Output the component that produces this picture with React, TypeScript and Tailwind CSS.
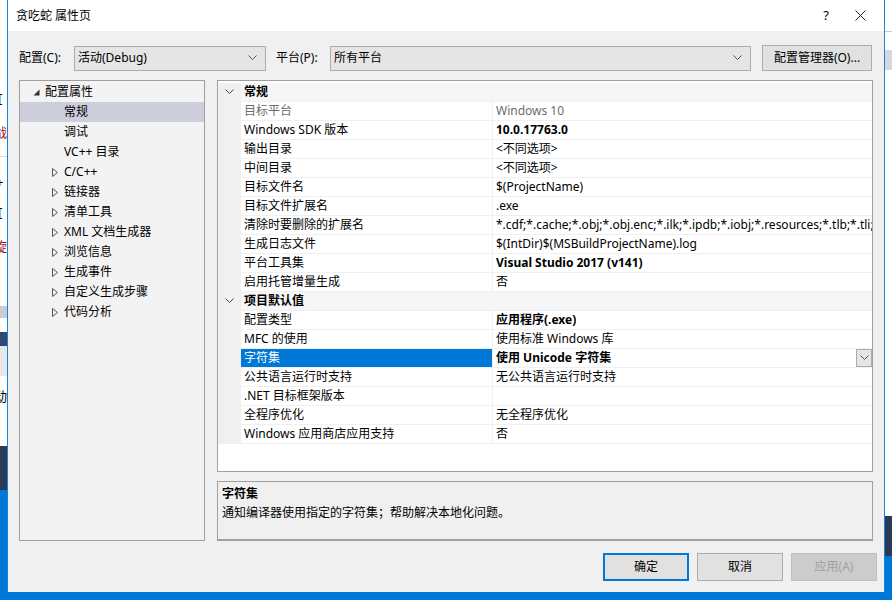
import React from 'react';

type Row = { name: string; value: string; bold?: boolean; muted?: boolean; selected?: boolean };

const general: Row[] = [
  { name: '目标平台', value: 'Windows 10', muted: true },
  { name: 'Windows SDK 版本', value: '10.0.17763.0', bold: true },
  { name: '输出目录', value: '<不同选项>' },
  { name: '中间目录', value: '<不同选项>' },
  { name: '目标文件名', value: '$(ProjectName)' },
  { name: '目标文件扩展名', value: '.exe' },
  {
    name: '清除时要删除的扩展名',
    value: '*.cdf;*.cache;*.obj;*.obj.enc;*.ilk;*.ipdb;*.iobj;*.resources;*.tlb;*.tli;*.tlh;*.tmp;*.rsp',
  },
  { name: '生成日志文件', value: '$(IntDir)$(MSBuildProjectName).log' },
  { name: '平台工具集', value: 'Visual Studio 2017 (v141)', bold: true },
  { name: '启用托管增量生成', value: '否' },
];

const defaults: Row[] = [
  { name: '配置类型', value: '应用程序(.exe)', bold: true },
  { name: 'MFC 的使用', value: '使用标准 Windows 库' },
  { name: '字符集', value: '使用 Unicode 字符集', bold: true, selected: true },
  { name: '公共语言运行时支持', value: '无公共语言运行时支持' },
  { name: '.NET 目标框架版本', value: '' },
  { name: '全程序优化', value: '无全程序优化' },
  { name: 'Windows 应用商店应用支持', value: '否' },
];

const tree = [
  { label: '常规', exp: false, selected: true },
  { label: '调试', exp: false },
  { label: 'VC++ 目录', exp: false },
  { label: 'C/C++', exp: true },
  { label: '链接器', exp: true },
  { label: '清单工具', exp: true },
  { label: 'XML 文档生成器', exp: true },
  { label: '浏览信息', exp: true },
  { label: '生成事件', exp: true },
  { label: '自定义生成步骤', exp: true },
  { label: '代码分析', exp: true },
];

function Chevron({ className = '' }: { className?: string }) {
  return (
    <svg width="9" height="6" viewBox="0 0 9 6" className={className}>
      <polyline points="0.5,0.5 4.5,4.5 8.5,0.5" fill="none" stroke="currentColor" strokeWidth="1" />
    </svg>
  );
}

function Combo({ text, width }: { text: string; width: string }) {
  return (
    <div className={`${width} h-[25px] flex items-center justify-between border border-[#acacac] bg-[#e5e5e5] pl-[3px] pr-[8px]`}>
      <span>{text}</span>
      <Chevron className="text-[#555]" />
    </div>
  );
}

function Category({ title }: { title: string }) {
  return (
    <div className="flex h-[19px] border-b border-[#f0f0f0] bg-[#f5f6f8]">
      <div className="w-[23px] flex items-center justify-center bg-[#f0f0f0]">
        <Chevron className="text-[#444]" />
      </div>
      <div className="flex items-center pl-[3px] font-bold">{title}</div>
    </div>
  );
}

function PropRow({ r }: { r: Row }) {
  return (
    <div className="flex h-[19px] border-b border-[#f0f0f0]">
      <div className="w-[23px] shrink-0 bg-[#f0f0f0]" />
      <div
        className={`w-[251px] shrink-0 flex items-center pl-[3px] whitespace-nowrap overflow-hidden ${
          r.selected ? 'bg-[#0078d7] text-white' : r.muted ? 'text-[#6d6d6d]' : ''
        }`}
      >
        {r.name}
      </div>
      <div className="w-px shrink-0 bg-[#f0f0f0]" />
      <div
        className={`flex-1 min-w-0 flex items-center justify-between pl-[3px] whitespace-nowrap overflow-hidden ${
          r.bold ? 'font-bold' : ''
        } ${r.muted ? 'text-[#6d6d6d]' : ''}`}
      >
        <span className="overflow-hidden">{r.value}</span>
        {r.selected && (
          <div className="shrink-0 w-[16px] h-[18px] border border-[#acacac] bg-[#e5e5e5] flex items-center justify-center">
            <Chevron className="text-[#555]" />
          </div>
        )}
      </div>
    </div>
  );
}

function Btn({ label, kind }: { label: string; kind?: 'default' | 'disabled' }) {
  const cls =
    kind === 'default'
      ? 'border-2 border-[#0078d7] bg-[#e1e1e1]'
      : kind === 'disabled'
        ? 'border border-[#bfbfbf] bg-[#cccccc] text-[#a0a0a0]'
        : 'border border-[#adadad] bg-[#e1e1e1]';
  return <div className={`w-[86px] h-[28px] flex items-center justify-center ${cls}`}>{label}</div>;
}

export default function App() {
  return (
    <div
      className="w-[892px] h-[600px] flex flex-col overflow-hidden bg-white text-[12px] text-black"
      style={{ fontFamily: '"Segoe UI", "Noto Sans", "Noto Sans CJK SC", sans-serif' }}
    >
      <div className="flex h-[592px]">
        {/* background window edge on the left */}
        <div className="w-[7px] shrink-0 flex flex-col overflow-hidden bg-white text-[13px] leading-none">
          <div className="h-[92px]" />
          <div className="h-[34px] -ml-[2px]">[</div>
          <div className="h-[30px] -ml-[6px] text-[#a31515]">战</div>
          <div className="h-[20px] border-t border-[#ddd]" />
          <div className="h-[30px] -ml-[4px]">+</div>
          <div className="h-[34px] -ml-[2px]">[</div>
          <div className="h-[40px] -ml-[6px] text-[#a31515]">旋</div>
          <div className="h-[26px]" />
          <div className="h-[12px] bg-[#c9ccd3]" />
          <div className="h-[14px] bg-white" />
          <div className="h-[14px] bg-[#2f4a6e]" />
          <div className="h-[30px] bg-[#e8e8ec]" />
          <div className="h-[40px] -ml-[6px] pt-[14px]">动</div>
          <div className="h-[30px]" />
          <div className="h-[44px] bg-[#2b3a55]" />
          <div className="flex-1 bg-[#0078d7]" />
        </div>

        {/* dialog */}
        <div className="w-[878px] shrink-0 flex flex-col border-x border-[#1883d7] bg-[#f0f0f0]">
          <div className="h-[31px] shrink-0 flex items-center bg-white pl-[8px]">
            <span className="flex-1 text-[12px]">贪吃蛇 属性页</span>
            <span className="w-[30px] text-center text-[13px] mr-[14px]">?</span>
            <svg width="11" height="11" viewBox="0 0 11 11" className="mr-[18px]">
              <path d="M0.5 0.5 L10.5 10.5 M10.5 0.5 L0.5 10.5" stroke="#222" strokeWidth="1" />
            </svg>
          </div>

          <div className="flex items-center mt-[14px] pl-[11px] h-[26px]">
            <span className="w-[55px]">配置(C):</span>
            <Combo text="活动(Debug)" width="w-[192px]" />
            <span className="ml-[10px] w-[54px]">平台(P):</span>
            <Combo text="所有平台" width="w-[421px]" />
            <div className="ml-[11px] w-[110px] h-[26px] border border-[#adadad] bg-[#e1e1e1] flex items-center justify-center">
              配置管理器(O)...
            </div>
          </div>

          <div className="flex mt-[9px] pl-[11px] gap-[12px]">
            <div className="w-[186px] h-[461px] border border-[#a0a0a0] bg-[#f3f3f3] pt-px">
              <div className="h-[20px] flex items-center pl-[13px]">
                <svg width="7" height="7" viewBox="0 0 7 7">
                  <polygon points="6.5,0.5 6.5,6.5 0.5,6.5" fill="#333" />
                </svg>
                <span className="ml-[5px]">配置属性</span>
              </div>
              {tree.map((t) => (
                <div
                  key={t.label}
                  className={`h-[20px] flex items-center ${t.selected ? 'bg-[#cccedb]' : ''}`}
                >
                  <div className="w-[44px] flex justify-end pr-[6px]">
                    {t.exp && (
                      <svg width="6" height="9" viewBox="0 0 6 9">
                        <polygon points="0.5,0.5 5.5,4.5 0.5,8.5" fill="none" stroke="#555" strokeWidth="1" />
                      </svg>
                    )}
                  </div>
                  <span>{t.label}</span>
                </div>
              ))}
            </div>

            <div className="w-[656px] flex flex-col gap-[9px]">
              <div className="h-[392px] border border-[#a0a0a0] bg-white overflow-hidden pt-[2px]">
                <Category title="常规" />
                {general.map((r) => (
                  <PropRow key={r.name} r={r} />
                ))}
                <Category title="项目默认值" />
                {defaults.map((r) => (
                  <PropRow key={r.name} r={r} />
                ))}
              </div>
              <div className="h-[60px] border border-[#a0a0a0] border-b-2 bg-[#f0f0f0] px-[4px] pt-[2px] leading-[19px]">
                <div className="font-bold">字符集</div>
                <div>通知编译器使用指定的字符集；帮助解决本地化问题。</div>
              </div>
            </div>
          </div>

          <div className="flex justify-end gap-[8px] mt-[12px] pr-[7px]">
            <Btn label="确定" kind="default" />
            <Btn label="取消" />
            <Btn label="应用(A)" kind="disabled" />
          </div>
        </div>

        {/* background window edge on the right */}
        <div className="flex-1 flex flex-col bg-white">
          <div className="h-[31px]" />
          <div className="h-px bg-[#ccc]" />
          <div className="h-[18px]" />
          <div className="h-[20px] bg-[#d5d8e0]" />
          <div className="h-[446px]" />
          <div className="h-[40px] bg-[#2b3a55]" />
          <div className="flex-1 bg-[#0078d7]" />
        </div>
      </div>
      <div className="flex-1 bg-[#0078d7]" />
    </div>
  );
}
